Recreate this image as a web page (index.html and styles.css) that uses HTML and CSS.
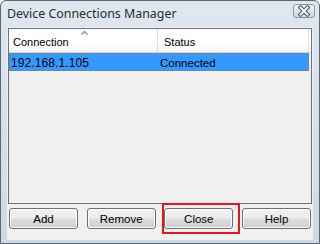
FILE: index.html
```html
<!DOCTYPE html>
<html>
<head>
<meta charset="utf-8">
<link rel="stylesheet" href="styles.css">
</head>
<body>
<div class="window">
  <div class="titlebar">
    <span class="title">Device Connections Manager</span>
    <div class="close-btn">
      <svg width="22" height="14" viewBox="0 0 22 14">
        <defs>
          <linearGradient id="cb" x1="0" y1="0" x2="0" y2="1">
            <stop offset="0" stop-color="#f4f7fa"/>
            <stop offset="0.5" stop-color="#dde5ed"/>
            <stop offset="1" stop-color="#cbd6e1"/>
          </linearGradient>
        </defs>
        <rect x="0.5" y="0.5" width="21" height="13" rx="2.5" fill="url(#cb)" stroke="#8d98a4"/>
        <path d="M7.5 3.5 L14.5 10.5 M14.5 3.5 L7.5 10.5" stroke="#4a525c" stroke-width="4" stroke-linecap="square"/>
        <path d="M7.5 3.5 L14.5 10.5 M14.5 3.5 L7.5 10.5" stroke="#f4f6f8" stroke-width="2" stroke-linecap="square"/>
      </svg>
    </div>
  </div>
  <div class="client">
    <div class="list">
      <div class="header">
        <div class="hcol c1">Connection
          <svg class="sort" width="7" height="4" viewBox="0 0 7 4"><path d="M0.5 3.5 L3.5 0.5 L6.5 3.5" fill="none" stroke="#5a8fbf" stroke-width="1.2"/></svg>
        </div>
        <div class="hcol c2">Status</div>
      </div>
      <div class="row selected">
        <div class="cell c1 ip">192.168.1.105</div>
        <div class="cell c2">Connected</div>
      </div>
    </div>
    <div class="buttons">
      <button class="btn">Add</button>
      <button class="btn">Remove</button>
      <button class="btn">Close</button>
      <button class="btn">Help</button>
    </div>
  </div>
  <div class="highlight"></div>
</div>
</body>
</html>
```
FILE: styles.css
```css
html, body {
  margin: 0;
  padding: 0;
  background: #ffffff;
}
.window {
  position: relative;
  box-sizing: border-box;
  width: 320px;
  height: 244px;
  border: 1px solid #5d6874;
  border-radius: 6px 6px 0 0;
  background: linear-gradient(#dfe7f0, #cdd9e5);
  padding: 0 6px 3px 6px;
  display: flex;
  flex-direction: column;
}
.titlebar {
  height: 26px;
  flex: none;
  display: flex;
  align-items: center;
  position: relative;
}
.title {
  font-family: "Noto Sans", "Open Sans", sans-serif;
  font-size: 12.4px;
  color: #2b2b2b;
  margin-top: -1px;
}
.close-btn {
  position: absolute;
  right: -2px;
  top: 3px;
  width: 22px;
  height: 14px;
}
.close-btn svg { display: block; }
.client {
  flex: 1;
  background: #f0f0f0;
  display: flex;
  flex-direction: column;
  font-family: "Liberation Sans", Arial, sans-serif;
  font-size: 11px;
  color: #000;
}
.list {
  margin: 1px 1px 0 1px;
  height: 176px;
  box-sizing: border-box;
  border: 1px solid #6f747b;
  background: #f0f0f0;
}
.header {
  display: flex;
  height: 24px;
  box-sizing: border-box;
  border-bottom: 1px solid #d5d5d5;
  background: linear-gradient(#ffffff 0%, #ffffff 55%, #f3f4f6 100%);
}
.hcol {
  position: relative;
  box-sizing: border-box;
  padding: 7px 0 0 4px;
  font-size: 11px;
}
.hcol.c1 {
  width: 149px;
  border-right: 1px solid #dadde2;
}
.hcol.c2 {
  flex: 1;
  padding-left: 6px;
  border-right: 1px solid #e2e4e8;
  margin-right: 2px;
}
.sort {
  position: absolute;
  left: 72px;
  top: 2px;
}
.row {
  display: flex;
  height: 18px;
  align-items: center;
}
.row.selected {
  background: #3399ff;
  box-shadow: inset 0 0 0 1px #6e86a0;
  margin-right: 2px;
}
.cell {
  box-sizing: border-box;
  font-size: 12px;
  padding-top: 1px;
}
.cell.c1 {
  width: 149px;
  padding-left: 2px;
}
.cell.c2 {
  flex: 1;
  padding-left: 2px;
  font-size: 11.5px;
}
.ip {
  letter-spacing: 0.1px;
}
.buttons {
  display: flex;
  justify-content: space-between;
  padding: 0 2px 0 2px;
  margin-top: 4px;
}
.btn {
  width: 69px;
  height: 21px;
  box-sizing: border-box;
  border: 1px solid #707070;
  border-radius: 3px;
  background: linear-gradient(#f2f2f2 0%, #ebebeb 48%, #dddddd 52%, #cfcfcf 100%);
  box-shadow: inset 0 0 0 1px #fbfbfb;
  font-family: "Liberation Sans", Arial, sans-serif;
  font-size: 11.5px;
  color: #000;
  padding: 0;
}
.highlight {
  position: absolute;
  left: 161px;
  top: 202px;
  width: 78px;
  height: 31px;
  box-sizing: border-box;
  border: 2px solid #e8141b;
}
```
